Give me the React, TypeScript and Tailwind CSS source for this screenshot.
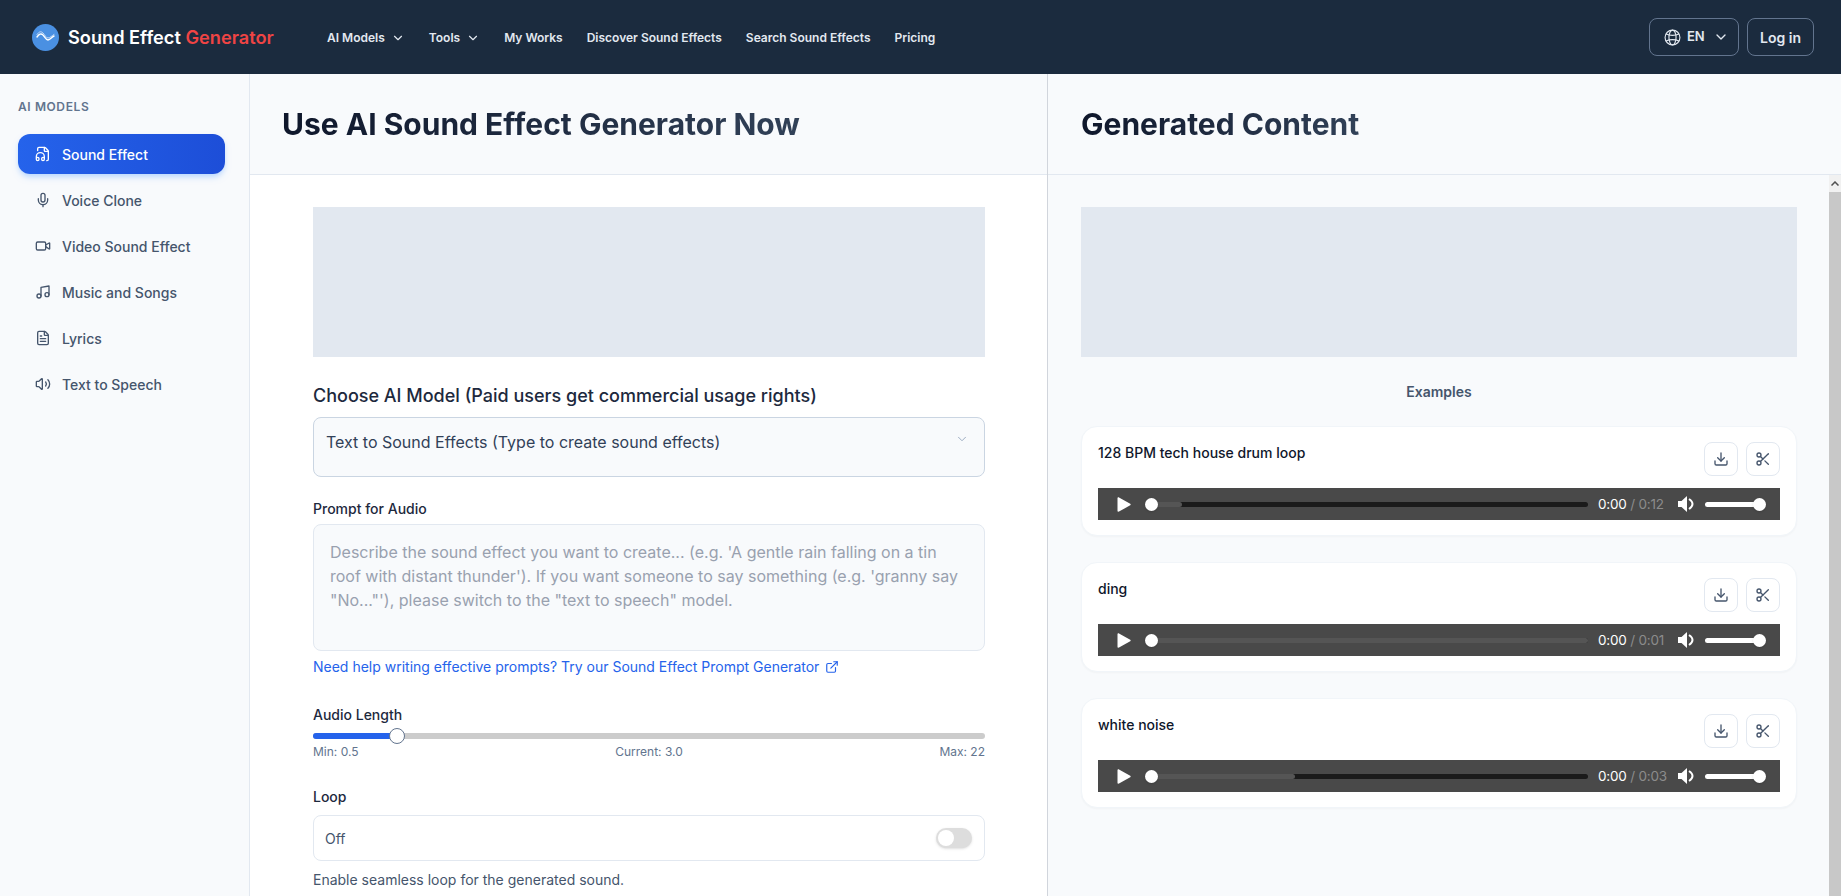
import React from 'react';
import { ChevronDown, Download, ExternalLink, FileHeadphone, FileText, Mic, Music, Scissors, Video, Volume2 } from 'lucide-react';

const navItems = [
  { label: 'AI Models', caret: true },
  { label: 'Tools', caret: true },
  { label: 'My Works' },
  { label: 'Discover Sound Effects' },
  { label: 'Search Sound Effects' },
  { label: 'Pricing' },
];

const models = [
  { label: 'Sound Effect', icon: FileHeadphone, active: true },
  { label: 'Voice Clone', icon: Mic },
  { label: 'Video Sound Effect', icon: Video },
  { label: 'Music and Songs', icon: Music },
  { label: 'Lyrics', icon: FileText },
  { label: 'Text to Speech', icon: Volume2 },
];

const examples = [
  { title: '128 BPM tech house drum loop', total: '0:12', buffered: 7 },
  { title: 'ding', total: '0:01', buffered: 100 },
  { title: 'white noise', total: '0:03', buffered: 33 },
];

const Logo = () => (
  <svg width="27" height="27" viewBox="0 0 27 27" className="shrink-0">
    <circle cx="13.5" cy="13.5" r="13.5" fill="#4a90e2" />
    <path d="M5 13c2-3 4-4 6-2s3 5 5 5 4-3 6-4" fill="none" stroke="#fff" strokeWidth="1.4" strokeLinecap="round" />
    <path d="M5 10.500c2-3 4-3.500 6-1.500s3 5 5 5 4-2.500 6-3.500" fill="none" stroke="#c4dcf7" strokeWidth="1" strokeLinecap="round" />
  </svg>
);

const Globe = () => (
  <svg width="17" height="17" viewBox="0 0 24 24" fill="none" stroke="currentColor" strokeWidth="1.6" className="shrink-0">
    <circle cx="12" cy="12" r="10.5" />
    <ellipse cx="12" cy="12" rx="5" ry="10.5" />
    <path d="M3 7c5 2.600 13 2.600 18 0M3 17c5-2.600 13-2.600 18 0" />
  </svg>
);

const PlayerIcon = () => (
  <svg width="17" height="16" viewBox="0 0 17 16" fill="#fff" className="shrink-0">
    <path d="M0 5h3.500L9 0v16l-5.500-5H0z" />
    <path d="M11 3c2 1.300 3.500 3 3.500 5s-1.500 3.700-3.500 5" fill="none" stroke="#fff" strokeWidth="2" />
  </svg>
);

const AudioBar = ({ total, buffered }: { total: string; buffered: number }) => (
  <div className="h-8 bg-[#494949] flex items-center pl-[19px]">
    <svg width="14" height="15" viewBox="0 0 14 15" fill="#fff" className="shrink-0">
      <path d="M0.500 1.200C0.500 0.400 1.300 0 2 0.400l11.200 6.300c0.600 0.400 0.600 1.200 0 1.600L2 14.600c-0.700 0.400-1.500 0-1.500-0.800z" />
    </svg>
    <div className="relative ml-[20px] w-[437px] h-[5px] rounded-full bg-[#1a1a1a]">
      <div className="h-full rounded-full bg-[#555555]" style={{ width: `${buffered}%` }} />
      <div className="absolute -left-[6px] -top-[4px] w-[13px] h-[13px] rounded-full bg-white shadow" />
    </div>
    <div className="ml-[10px] w-[80px] shrink-0 text-[13.500px] tracking-[-0.2px] text-white whitespace-nowrap">
      0:00 <span className="text-[#8c8c8c]">/ {total}</span>
    </div>
    <PlayerIcon />
    <div className="relative ml-[10px] w-[60px] h-[5px] rounded-full bg-white">
      <div className="absolute right-[-1px] -top-[4px] w-[13px] h-[13px] rounded-full bg-white shadow" />
    </div>
  </div>
);

const ExampleCard = ({ title, total, buffered }: { title: string; total: string; buffered: number }) => (
  <div className="h-[110px] rounded-2xl bg-white border border-slate-100 px-4 pt-[15px] shadow-[0_1px_2px_rgba(15,23,42,0.03)]">
    <div className="flex items-start justify-between h-[46px]">
      <span className="text-[14px] leading-5 mt-[1px] font-medium text-slate-900">{title}</span>
      <div className="flex gap-2">
        <button className="w-[34px] h-[34px] rounded-lg border border-slate-200 flex items-center justify-center text-slate-600">
          <Download size={16} />
        </button>
        <button className="w-[34px] h-[34px] rounded-lg border border-slate-200 flex items-center justify-center text-slate-600">
          <Scissors size={16} />
        </button>
      </div>
    </div>
    <AudioBar total={total} buffered={buffered} />
  </div>
);

const App: React.FC = () => {
  return (
    <div className="h-screen flex flex-col overflow-hidden font-['Inter',sans-serif] text-slate-900">
      <header className="h-[74px] shrink-0 bg-[#1b2b3e] flex items-center pl-[32px] pr-[27px]">
        <div className="flex items-center gap-[9px] w-[295px] mt-[1px]">
          <Logo />
          <span className="text-[18.200px] font-semibold text-white whitespace-nowrap">
            Sound Effect <span className="text-[#ef4444]">Generator</span>
          </span>
        </div>
        <nav className="flex items-center gap-6 mt-[1px]">
          {navItems.map((item) => (
            <a key={item.label} className="flex items-center gap-[6px] text-[12px] font-semibold text-slate-200 whitespace-nowrap">
              {item.label}
              {item.caret && <ChevronDown size={14} />}
            </a>
          ))}
        </nav>
        <div className="ml-auto flex items-center gap-2">
          <button className="w-[90px] h-[38px] rounded-lg border border-slate-500 flex items-center pl-[14px] pr-[9px] gap-[6px] text-slate-200 text-[13px] font-semibold">
            <Globe />
            EN
            <ChevronDown size={16} className="ml-auto shrink-0" />
          </button>
          <button className="w-[67px] h-[38px] rounded-lg border border-slate-500 text-slate-200 text-[14px] font-semibold">Log in</button>
        </div>
      </header>

      <div className="flex-1 flex min-h-0">
        <aside className="w-[250px] shrink-0 bg-[#f8fafc] border-r border-slate-200 pl-[18px] pr-[24px] pt-[25px]">
          <div className="text-[12px] font-semibold tracking-[0.6px] text-slate-500 leading-4">AI MODELS</div>
          <div className="mt-[19px] flex flex-col gap-[6px]">
            {models.map((m) => (
              <div
                key={m.label}
                className={
                  m.active
                    ? 'h-10 rounded-xl flex items-center gap-[11px] px-[17px] text-[14px] font-medium text-white bg-gradient-to-r from-[#2563eb] to-[#1d4ed8] shadow-md shadow-blue-200'
                    : 'h-10 rounded-xl flex items-center gap-[11px] px-[17px] text-[14px] font-medium text-slate-600'
                }
              >
                <m.icon size={16} className="shrink-0" />
                {m.label}
              </div>
            ))}
          </div>
        </aside>

        <main className="w-[798px] shrink-0 border-r border-gray-300 flex flex-col min-h-0">
          <div className="h-[101px] shrink-0 bg-[#f8fafc] border-b border-slate-200 flex items-center px-8">
            <h1 className="text-[30px] font-bold bg-gradient-to-r from-slate-900 to-slate-700 bg-clip-text text-transparent">
              Use AI Sound Effect Generator Now
            </h1>
          </div>
          <div className="flex-1 overflow-hidden bg-white pl-[63px] pr-[62px] pt-[32px]">
            <div className="h-[150px] bg-[#e2e8f0]" />
            <div className="mt-[25px] text-[18px] leading-7 font-medium text-slate-800">Choose AI Model (Paid users get commercial usage rights)</div>
            <div className="mt-[7px] h-[60px] rounded-lg border border-slate-300 bg-[#f8fafc] flex justify-between pl-[12px] pr-[15px] pt-[12px]">
              <span className="text-[16px] leading-6 text-slate-700">Text to Sound Effects (Type to create sound effects)</span>
              <ChevronDown size={14} strokeWidth={1.500} className="text-slate-400 mt-[2px]" />
            </div>
            <div className="mt-[22px] text-[14px] leading-5 font-medium text-slate-800">Prompt for Audio</div>
            <div className="mt-[5px] h-[127px] rounded-lg border border-slate-200 bg-[#f8fafc] px-4 pt-[15px] text-[16px] leading-6 text-gray-400">
              Describe the sound effect you want to create... (e.g. 'A gentle rain falling on a tin roof with distant thunder'). If you want someone to say something (e.g. 'granny say "No..."'), please switch to the "text to speech" model.
            </div>
            <a className="mt-[6px] flex items-center gap-[6px] text-[14px] leading-5 text-[#2563eb]">
              Need help writing effective prompts? Try our Sound Effect Prompt Generator
              <ExternalLink size={14} />
            </a>
            <div className="mt-[28px] text-[14px] leading-5 font-medium text-slate-800">Audio Length</div>
            <div className="relative mt-[8px] h-[6px] rounded-full bg-[#cccccc]">
              <div className="h-full w-[84px] rounded-full bg-[#2563eb]" />
              <div className="absolute left-[76px] -top-[5px] w-4 h-4 rounded-full bg-white border border-slate-500" />
            </div>
            <div className="mt-[5px] flex justify-between text-[12px] leading-4 text-slate-500">
              <span>Min: 0.5</span>
              <span>Current: 3.0</span>
              <span>Max: 22</span>
            </div>
            <div className="mt-[27px] text-[14px] leading-5 font-medium text-slate-800">Loop</div>
            <div className="mt-[8px] h-[46px] rounded-lg border border-slate-200 flex items-center justify-between pl-[11px] pr-[12px]">
              <span className="text-[14px] text-slate-600">Off</span>
              <div className="w-9 h-5 rounded-full bg-[#dddddd] flex items-center px-[2px] shadow">
                <div className="w-4 h-4 rounded-full bg-white" />
              </div>
            </div>
            <div className="mt-[9px] text-[14px] leading-5 text-slate-600">Enable seamless loop for the generated sound.</div>
          </div>
        </main>

        <section className="flex-1 min-w-0 bg-[#f8fafc] flex flex-col">
          <div className="h-[101px] shrink-0 border-b border-slate-200 flex items-center pl-[33px]">
            <h2 className="text-[30px] font-bold bg-gradient-to-r from-slate-900 to-slate-700 bg-clip-text text-transparent">
              Generated Content
            </h2>
          </div>
          <div className="flex-1 min-h-0 flex">
            <div className="flex-1 min-w-0 pl-[33px] pr-[32px] pt-[32px]">
              <div className="h-[150px] bg-[#e2e8f0]" />
              <div className="mt-[25px] text-center text-[14px] leading-5 font-semibold text-slate-600">Examples</div>
              <div className="mt-[24px] flex flex-col gap-[26px]">
                {examples.map((e) => (
                  <ExampleCard key={e.title} {...e} />
                ))}
              </div>
            </div>
            <div className="w-[12px] shrink-0 bg-[#f1f1f1] flex flex-col">
              <div className="h-[17px] flex items-center justify-center text-[#505050]">
                <svg width="8" height="5" viewBox="0 0 8 5" fill="none" stroke="currentColor" strokeWidth="1.500"><path d="M0.500 4.500 4 1l3.500 3.500" /></svg>
              </div>
              <div className="flex-1 bg-[#c8c8c8]" />
            </div>
          </div>
        </section>
      </div>
    </div>
  );
};

export default App;
